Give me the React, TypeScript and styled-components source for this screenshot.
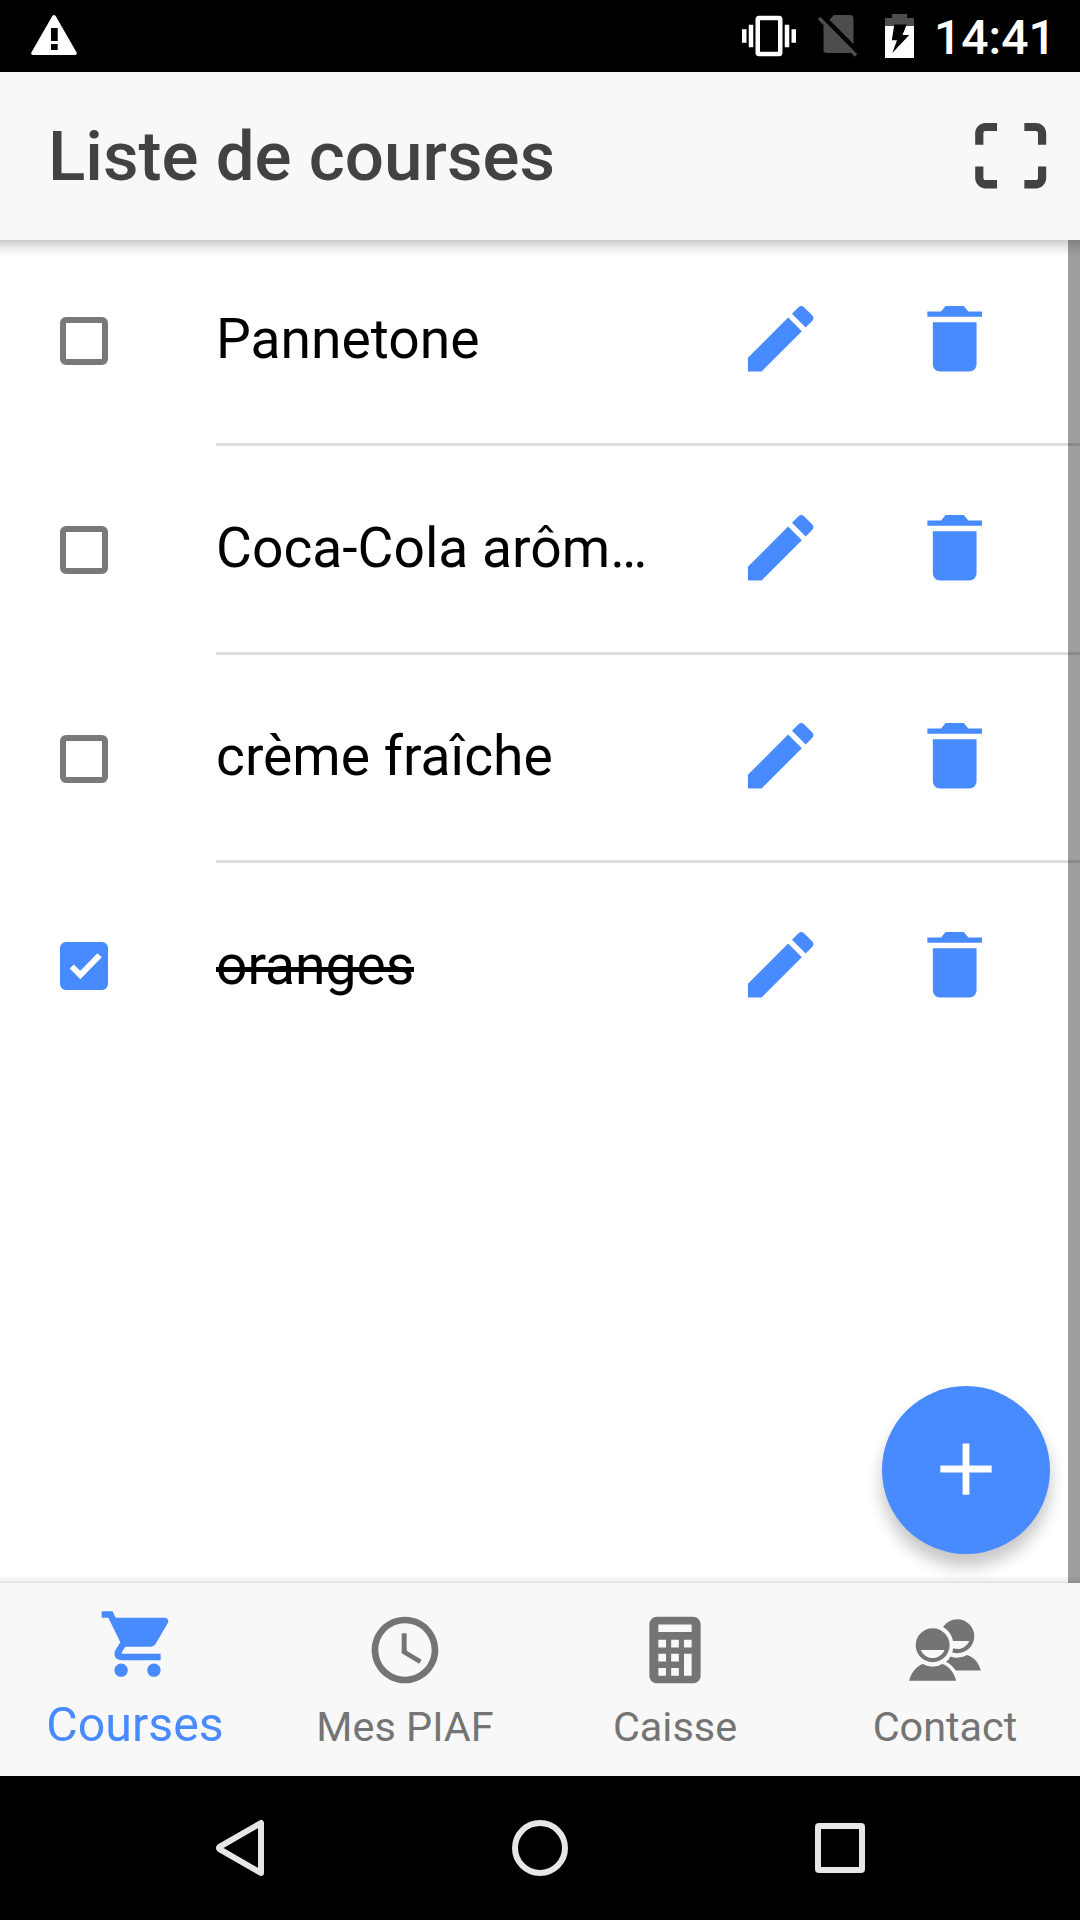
import React from "react";
import styled, { createGlobalStyle } from "styled-components";
import {
  IoMdAdd,
  IoMdCalculator,
  IoMdCart,
  IoMdContacts,
  IoMdCreate,
  IoMdQrScanner,
  IoMdTime,
  IoMdTrash,
} from "react-icons/io";

const BLUE = "#488aff";
const GREY = "#747474";

const GlobalStyle = createGlobalStyle`
  *, *::before, *::after { box-sizing: border-box; }
  body { margin: 0; background: #fff; font-family: Roboto, "Noto Sans", sans-serif; }
  button { font: inherit; border: 0; padding: 0; background: none; }
  svg { display: block; flex: none; }
`;

const Screen = styled.div`
  display: flex;
  flex-direction: column;
  width: 1080px;
  height: 1920px;
  overflow: hidden;
`;

const StatusBar = styled.div`
  display: flex;
  align-items: center;
  justify-content: space-between;
  height: 72px;
  padding: 0 29px 0 31px;
  background: #000;
`;

const StatusIcons = styled.div`
  display: flex;
  align-items: center;
`;

const NoSim = styled.svg`
  margin-left: 21px;
`;

const Battery = styled.svg`
  margin-left: 26px;
`;

const Clock = styled.span`
  margin-left: 20px;
  width: 117px;
  color: #fff;
  font-size: 48px;
  font-weight: 500;
  line-height: 72px;
  padding-top: 3px;
  white-space: nowrap;
`;

const Header = styled.header`
  display: flex;
  align-items: center;
  justify-content: space-between;
  height: 168px;
  padding: 0 26px 0 48px;
  background: #f8f8f8;
  color: #424242;
`;

const Title = styled.h1`
  margin: 2px 0 0;
  font-size: 69.1px;
  font-weight: 500;
  line-height: 80px;
`;

const ScanButton = styled.button`
  color: #424242;
  margin-top: -1px;
`;

const Content = styled.main`
  position: relative;
  height: 1343px;
  overflow: hidden;
  background: #fff;

  &::before {
    content: "";
    position: absolute;
    z-index: 3;
    inset: 0 0 auto;
    height: 16px;
    background: linear-gradient(rgba(0, 0, 0, 0.2), rgba(0, 0, 0, 0.08) 50%, rgba(0, 0, 0, 0));
  }

  &::after {
    content: "";
    position: absolute;
    z-index: 3;
    inset: auto 0 0;
    height: 6px;
    background: linear-gradient(rgba(0, 0, 0, 0.035), rgba(0, 0, 0, 0.055) 60%, rgba(0, 0, 0, 0.13));
  }
`;

const ScrollBar = styled.div`
  position: absolute;
  z-index: 2;
  inset: 0 0 0 auto;
  width: 12px;
  background: rgba(0, 0, 0, 0.38);
`;

const List = styled.ul`
  margin: -3px 0 0;
  padding: 0 0 0 60px;
  list-style: none;
`;

const Row = styled.li<{ $short?: boolean }>`
  display: flex;
  height: ${(p) => (p.$short ? 208 : 209)}px;
`;

const CheckBox = styled.button<{ $checked?: boolean; $top: number }>`
  flex: none;
  width: 48px;
  height: 48px;
  margin: ${(p) => p.$top}px 108px 0 0;
  border: ${(p) => (p.$checked ? "0" : "6px solid #797979")};
  border-radius: 6px;
  background: ${(p) => (p.$checked ? BLUE : "#fff")};
`;

const RowBody = styled.div<{ $short?: boolean; $last?: boolean }>`
  display: flex;
  flex: 1;
  padding-top: ${(p) => (p.$short ? 57 : 58)}px;
  border-bottom: ${(p) => (p.$last ? "0" : "3px solid #dedede")};
`;

const Label = styled.div`
  width: 520px;
  margin-top: 11px;
  font-size: 55.2px;
  line-height: 66px;
  color: #000;
  white-space: nowrap;
`;

const LabelText = styled.span<{ $done?: boolean }>`
  position: relative;
  display: inline-block;

  &::after {
    content: "";
    display: ${(p) => (p.$done ? "block" : "none")};
    position: absolute;
    inset: 35px 0 auto;
    height: 5px;
    background: #000;
  }
`;

const Actions = styled.div`
  display: flex;
  gap: 86px;
  color: ${BLUE};
`;

const RowAction = styled.button`
  display: block;
  width: 88px;
  height: 88px;
  padding: 0.2px 0 0 0.5px;
  color: ${BLUE};
`;

const Fab = styled.button`
  position: absolute;
  right: 30px;
  bottom: 29px;
  display: flex;
  align-items: center;
  justify-content: center;
  width: 168px;
  height: 168px;
  padding-bottom: 2px;
  border-radius: 50%;
  background: ${BLUE};
  color: #fff;
  box-shadow: 0 12px 18px rgba(0, 0, 0, 0.14), 0 12px 15px rgba(0, 0, 0, 0.1);
`;

const TabBar = styled.nav`
  display: grid;
  grid-template-columns: repeat(4, 1fr);
  height: 193px;
  background: #f8f8f8;
`;

const Tab = styled.button<{ $active?: boolean }>`
  display: flex;
  flex-direction: column;
  align-items: center;
  justify-content: flex-start;
  padding-top: ${(p) => (p.$active ? 20 : 26)}px;
  color: ${(p) => (p.$active ? BLUE : GREY)};

  svg * {
    opacity: 1;
    fill-opacity: 1;
  }
`;

const TabLabel = styled.span<{ $active?: boolean }>`
  margin-top: ${(p) => (p.$active ? 10 : 11)}px;
  font-size: ${(p) => (p.$active ? 48.3 : 41.4)}px;
  line-height: ${(p) => (p.$active ? 60 : 50)}px;
`;

const NavBar = styled.footer`
  display: grid;
  grid-template-columns: repeat(3, 300px);
  justify-content: center;
  place-items: center;
  height: 144px;
  background: #000;
`;

const NavIcon = styled.svg`
  fill: none;
  stroke: #e6e6e6;
  stroke-width: 6;
  stroke-linejoin: round;
`;

const items = [
  { label: "Pannetone", top: 80 },
  { label: "Coca-Cola arôm…", top: 80 },
  { label: "crème fraîche", top: 80, short: true },
  { label: "oranges", top: 79, done: true },
];

const tabs = [
  { label: "Courses", Icon: IoMdCart, active: true },
  { label: "Mes PIAF", Icon: IoMdTime },
  { label: "Caisse", Icon: IoMdCalculator },
  { label: "Contact", Icon: IoMdContacts },
];

export default function App() {
  return (
    <>
      <GlobalStyle />
      <Screen>
        <StatusBar>
          <svg width="46" height="42" viewBox="0 0 46 42">
            <path
              d="M21.2 1.2Q23 -1.2 24.8 1.2L45.5 37.3Q46.5 40 44 40H2Q-.5 40 .5 37.3Z"
              fill="#fff"
            />
            <path d="M20 13h6.7v13H20zM20 29h6.7v6H20z" fill="#000" />
          </svg>
          <StatusIcons>
            <svg width="54" height="54" viewBox="0 0 24 24" fill="#fff">
              <path d="M0 15h2V9H0v6zm3 2h2V7H3v10zm19-8v6h2V9h-2zm-3 8h2V7h-2v10zM16.5 3h-9C6.67 3 6 3.67 6 4.5v15c0 .83.67 1.5 1.5 1.5h9c.83 0 1.5-.67 1.5-1.5v-15c0-.83-.67-1.5-1.5-1.5zM16 19H8V5h8v14z" />
            </svg>
            <NoSim width="42" height="44" viewBox="0 0 42 44">
              <path
                d="M17 1H33Q36.5 1 36.5 4.500V36Q36.500 39 33 39H10Q6.500 39 6.500 36V12Z"
                fill="#4d4d4d"
              />
              <path d="M4.500 1.500L41.500 38.500" stroke="#000" strokeWidth="5" />
              <path d="M2 4L39 41.500" stroke="#4d4d4d" strokeWidth="3.500" />
            </NoSim>
            <Battery width="29" height="44" viewBox="0 0 29 44">
              <path d="M7 0H22V4H29V12H0V4H7Z" fill="#4d4d4d" />
              <path d="M0 12H29V44H0Z" fill="#fff" />
              <path d="M9.300 10.500H21.700L17.500 21H24.200L7.300 39L12 26.200H6.800Z" fill="#000" />
            </Battery>
            <Clock>14:41</Clock>
          </StatusIcons>
        </StatusBar>

        <Header>
          <Title>Liste de courses</Title>
          <ScanButton aria-label="Scanner">
            <IoMdQrScanner size={87.4} />
          </ScanButton>
        </Header>

        <Content>
          <List>
            {items.map(({ label, top, short, done }, i) => (
              <Row key={label} $short={short}>
                <CheckBox $checked={done} $top={top} aria-label={label}>
                  {done && (
                    <svg width="48" height="48" viewBox="0 0 48 48" fill="none">
                      <path d="M11.700 24.500L20.300 33.100L39.600 13.300" stroke="#fff" strokeWidth="5.900" />
                    </svg>
                  )}
                </CheckBox>
                <RowBody $short={short} $last={i === items.length - 1}>
                  <Label>
                    <LabelText $done={done}>{label}</LabelText>
                  </Label>
                  <Actions>
                    <RowAction aria-label="Modifier">
                      <IoMdCreate size={87.4} />
                    </RowAction>
                    <RowAction aria-label="Supprimer">
                      <IoMdTrash size={87.4} />
                    </RowAction>
                  </Actions>
                </RowBody>
              </Row>
            ))}
          </List>
          <Fab aria-label="Ajouter">
            <IoMdAdd size={82} />
          </Fab>
          <ScrollBar />
        </Content>

        <TabBar>
          {tabs.map(({ label, Icon, active }) => (
            <Tab key={label} $active={active}>
              <Icon size={82} />
              <TabLabel $active={active}>{label}</TabLabel>
            </Tab>
          ))}
        </TabBar>

        <NavBar>
          <NavIcon width="50" height="58" viewBox="0 0 50 58">
            <path d="M46 4V54L4.500 30.200Q3.500 29 4.500 27.800Z" />
          </NavIcon>
          <NavIcon width="56" height="56" viewBox="0 0 56 56">
            <circle cx="28" cy="28" r="25" />
          </NavIcon>
          <NavIcon width="50" height="50" viewBox="0 0 50 50">
            <rect x="3" y="3" width="44" height="44" rx="1" />
          </NavIcon>
        </NavBar>
      </Screen>
    </>
  );
}
